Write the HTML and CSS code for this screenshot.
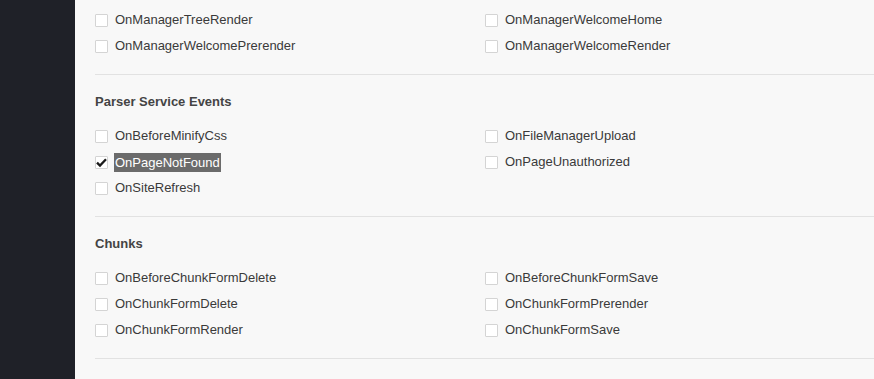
FILE: index.html
```html
<!DOCTYPE html>
<html lang="en">
<head>
<meta charset="utf-8">
<title>System Events</title>
<link rel="stylesheet" href="styles.css">
</head>
<body>
<div class="layout">
  <aside class="sidebar"></aside>
  <main class="content">
    <div class="scroller">
      <section class="group group-partial">
        <ul class="events">
          <li class="event"><span class="box"></span><span class="label">OnManagerTreeRender</span></li>
          <li class="event"><span class="box"></span><span class="label">OnManagerWelcomeHome</span></li>
          <li class="event"><span class="box"></span><span class="label">OnManagerWelcomePrerender</span></li>
          <li class="event"><span class="box"></span><span class="label">OnManagerWelcomeRender</span></li>
        </ul>
      </section>
      <section class="group">
        <h3 class="group-title">Parser Service Events</h3>
        <ul class="events">
          <li class="event"><span class="box"></span><span class="label">OnBeforeMinifyCss</span></li>
          <li class="event"><span class="box"></span><span class="label">OnFileManagerUpload</span></li>
          <li class="event"><span class="box checked"><svg viewBox="0 0 13 13" width="13" height="13"><path d="M2 6.6 L5 9.6 L11 3.3" fill="none" stroke="#1a1a1a" stroke-width="2.3"/></svg></span><span class="label selected">OnPageNotFound</span></li>
          <li class="event"><span class="box"></span><span class="label">OnPageUnauthorized</span></li>
          <li class="event"><span class="box"></span><span class="label">OnSiteRefresh</span></li>
        </ul>
      </section>
      <section class="group">
        <h3 class="group-title">Chunks</h3>
        <ul class="events">
          <li class="event"><span class="box"></span><span class="label">OnBeforeChunkFormDelete</span></li>
          <li class="event"><span class="box"></span><span class="label">OnBeforeChunkFormSave</span></li>
          <li class="event"><span class="box"></span><span class="label">OnChunkFormDelete</span></li>
          <li class="event"><span class="box"></span><span class="label">OnChunkFormPrerender</span></li>
          <li class="event"><span class="box"></span><span class="label">OnChunkFormRender</span></li>
          <li class="event"><span class="box"></span><span class="label">OnChunkFormSave</span></li>
        </ul>
      </section>
      <section class="group group-end"></section>
    </div>
  </main>
</div>
</body>
</html>
```
FILE: styles.css
```css
html, body {
  margin: 0;
  padding: 0;
  height: 100%;
  overflow: hidden;
}
body {
  font-family: "Liberation Sans", Arial, sans-serif;
  font-size: 13px;
  color: #3a3a3a;
  background: #f8f8f8;
}
.layout {
  display: flex;
  height: 100%;
}
.sidebar {
  width: 75px;
  flex: 0 0 75px;
  background: #1f2128;
}
.content {
  flex: 1;
  background: #f8f8f8;
  padding-left: 20px;
  overflow: hidden;
}
.group {
  border-top: 1px solid #e2e2e2;
  padding: 17px 0 15px;
}
.group-partial {
  border-top: none;
  padding-top: 7px;
}
.group-title {
  margin: 0 0 11px;
  font-size: 13px;
  line-height: 20px;
  font-weight: bold;
  color: #444;
}
.events {
  list-style: none;
  margin: 0;
  padding: 0;
  display: grid;
  grid-template-columns: 390px 390px;
}
.event {
  display: flex;
  align-items: center;
  height: 26px;
  line-height: 26px;
}
.box {
  box-sizing: border-box;
  width: 13px;
  height: 13px;
  border: 1px solid #d4d4d4;
  border-radius: 1px;
  background: #fff;
  margin-right: 7px;
  flex: 0 0 13px;
  position: relative;
}
.box svg {
  position: absolute;
  left: -1px;
  top: -1px;
  display: block;
}
.label {
  white-space: nowrap;
}
.label.selected {
  background: #6b6b6b;
  color: #fff;
  line-height: 19px;
  padding: 0 1px;
  margin-left: -1px;
}
```
